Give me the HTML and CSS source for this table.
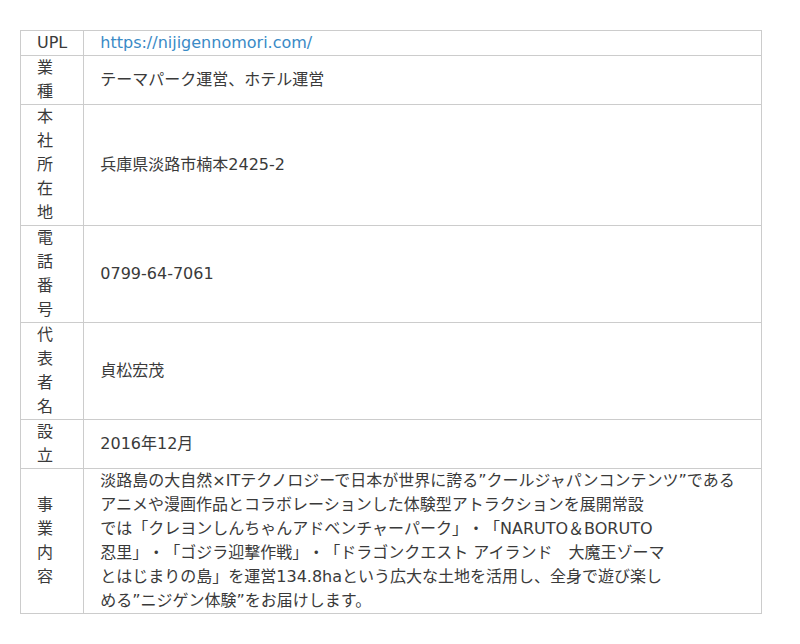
FILE: index.html
```html
<!DOCTYPE html>
<html lang="ja">
<head>
    <meta charset="UTF-8">
    <meta name="viewport" content="width=device-width, initial-scale=1.0">
    <title>会社概要</title>
    <link rel="stylesheet" href="styles.css">
</head>
<body>
    <div class="company">
        <table class="company-table">
            <tbody>
                <tr>
                    <th>UPL</th>
                    <td><a href="https://nijigennomori.com/">https://nijigennomori.com/</a></td>
                </tr>
                <tr>
                    <th>業種</th>
                    <td>テーマパーク運営、ホテル運営</td>
                </tr>
                <tr>
                    <th>本社所在地</th>
                    <td>兵庫県淡路市楠本2425-2</td>
                </tr>
                <tr>
                    <th>電話番号</th>
                    <td>0799-64-7061</td>
                </tr>
                <tr>
                    <th>代表者名</th>
                    <td>貞松宏茂</td>
                </tr>
                <tr>
                    <th>設立</th>
                    <td>2016年12月</td>
                </tr>
                <tr>
                    <th>事業内容</th>
                    <td>淡路島の大自然×ITテクノロジーで日本が世界に誇る”クールジャパンコンテンツ”である<br>アニメや漫画作品とコラボレーションした体験型アトラクションを展開常設<br>では「クレヨンしんちゃんアドベンチャーパーク」・「NARUTO＆BORUTO<br>忍里」・「ゴジラ迎撃作戦」・「ドラゴンクエスト アイランド　大魔王ゾーマ<br>とはじまりの島」を運営134.8haという広大な土地を活用し、全身で遊び楽し<br>める”ニジゲン体験”をお届けします。</td>
                </tr>
            </tbody>
        </table>
    </div>
</body>
</html>
```

FILE: styles.css
```css
body {
    margin: 0;
    font-family: "DejaVu Sans", "Noto Sans CJK JP", sans-serif;
    font-size: 16px;
    line-height: 24px;
    color: #3a3a3a;
    background: #fff;
    text-spacing-trim: space-all;
}
.company {
    padding: 30px 20px;
}
.company-table {
    width: 742px;
    border-collapse: collapse;
    border: 1px solid #ccc;
}
.company-table th,
.company-table td {
    border: 1px solid #ccc;
    padding: 0 16px;
    vertical-align: middle;
    text-align: left;
}
.company-table th {
    width: 1px;
    font-weight: normal;
}
.company-table a {
    color: #3a8ac6;
    text-decoration: none;
}
```
